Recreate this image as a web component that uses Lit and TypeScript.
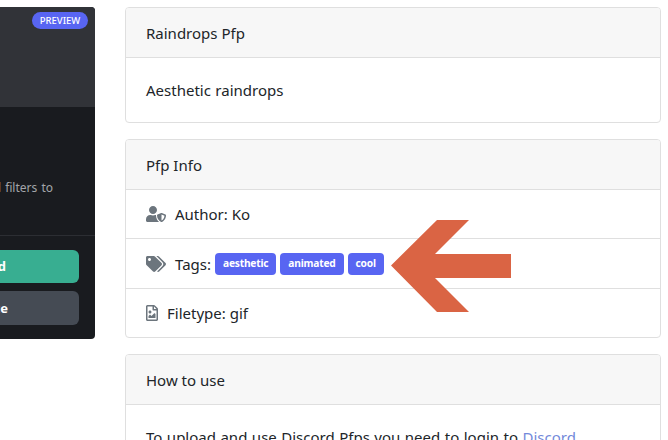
import { LitElement, html, css } from "lit";
import { customElement } from "lit/decorators.js";

@customElement("app-root")
export class AppRoot extends LitElement {
  static styles = css`
    :host {
      display: block;
      width: 668px;
      height: 440px;
      overflow: hidden;
      position: relative;
      background: #fff;
      font-family: "Noto Sans", "Open Sans", sans-serif;
      font-size: 15px;
      line-height: 24px;
      color: #212529;
    }
    .page {
      display: flex;
      align-items: flex-start;
      gap: 30px;
      width: 804px;
      margin-left: -143px;
      padding: 7px 0 0;
    }
    .side {
      flex: 0 0 238px;
      height: 332px;
      box-sizing: border-box;
      display: flex;
      flex-direction: column;
      background: #191b1f;
      border-radius: 4px;
      overflow: hidden;
      position: relative;
    }
    .banner {
      height: 100px;
      background: #313338;
    }
    .badge {
      position: absolute;
      top: 5px;
      right: 7px;
      height: 17px;
      width: 56px;
      border-radius: 9px;
      background: #5865f2;
      color: #fff;
      font-size: 9.5px;
      font-weight: 500;
      line-height: 17px;
      text-align: center;
    }
    .desc {
      height: 129px;
      box-sizing: border-box;
      padding-top: 71px;
      text-align: right;
      padding-right: 42px;
      font-size: 12px;
      word-spacing: 1px;
      line-height: 20px;
      color: #a3a6aa;
      border-bottom: 1px solid #2c2e33;
    }
    .actions {
      display: flex;
      flex-direction: column;
      gap: 8px;
      padding: 14px 16px 0;
    }
    .btn {
      height: 33px;
      border-radius: 6px;
      color: #fff;
      font-size: 13px;
      font-weight: 700;
      line-height: 33px;
      text-align: right;
    }
    .teal { background: #38ae91; padding-right: 73px; }
    .grey { background: #454b54; height: 34px; line-height: 34px; padding-right: 71px; }
    .main {
      flex: 0 0 536px;
      display: flex;
      flex-direction: column;
      gap: 16px;
    }
    .card {
      border: 1px solid #dfdfdf;
      border-radius: 4px;
      overflow: hidden;
      background: #fff;
    }
    .head {
      height: 49px;
      box-sizing: border-box;
      padding: 13px 20px 12px;
      background: #f7f7f7;
      border-bottom: 0;
    }
    .body {
      padding: 20px;
      border-top: 1px solid #dfdfdf;
      word-spacing: 0.6px;
    }
    .row {
      display: flex;
      align-items: center;
      padding: 12px 20px;
      height: 24px;
      border-top: 1px solid #dfdfdf;
    }
    .row.wide {
      height: 25px;
    }
    .ic {
      height: 16px;
      fill: #6c757d;
      flex: none;
      margin-right: 9px;
    }
    .tags {
      display: flex;
      gap: 4px;
      margin-left: 4px;
      margin-top: 1px;
    }
    .tag {
      height: 22px;
      border-radius: 4px;
      background: #5865f2;
      color: #fff;
      font-size: 10.2px;
      letter-spacing: -0.2px;
      font-weight: 700;
      line-height: 21px;
      padding: 0 8px;
    }
    a {
      color: #7289da;
      text-decoration: none;
    }
    .arrow {
      position: absolute;
      left: 391px;
      top: 220px;
      width: 120px;
      height: 92px;
      fill: #da6444;
    }
  `;

  render() {
    return html`
      <div class="page">
        <aside class="side">
          <div class="banner"></div>
          <span class="badge">PREVIEW</span>
          <div class="desc">and filters to</div>
          <div class="actions">
            <div class="btn teal">Download</div>
            <div class="btn grey">Favorite</div>
          </div>
        </aside>
        <main class="main">
          <section class="card">
            <div class="head">Raindrops Pfp</div>
            <div class="body">Aesthetic raindrops</div>
          </section>
          <section class="card">
            <div class="head">Pfp Info</div>
            <div class="row">
              <svg class="ic" viewBox="0 0 640 512"><path d="M622.3 271.1l-115.2-45c-4.1-1.6-12.6-3.7-22.2 0l-115.2 45c-10.7 4.2-17.7 14-17.7 24.9 0 111.6 68.7 188.8 132.9 213.9 9.6 3.7 18 1.6 22.2 0C558.4 489.9 640 420.5 640 296c0-10.9-7-20.7-17.7-24.9zM496 462.4V273.3l95.5 37.3c-5.6 87.1-60.9 135.4-95.5 151.8zM224 256c70.7 0 128-57.3 128-128S294.7 0 224 0 96 57.3 96 128s57.3 128 128 128zm96 40c0-2.5.8-4.8 1.1-7.2-2.5-.1-4.9-.8-7.5-.8h-16.7c-22.2 10.2-46.9 16-72.9 16s-50.6-5.8-72.9-16h-16.7C60.2 288 0 348.2 0 422.4V464c0 26.5 21.5 48 48 48h352c6.8 0 13.3-1.5 19.2-4-54-42.9-99.2-116.7-99.2-212z"/></svg>
              Author: Ko
            </div>
            <div class="row wide">
              <svg class="ic" viewBox="0 0 640 512"><path d="M497.941 225.941L286.059 14.059A48 48 0 0 0 252.118 0H48C21.49 0 0 21.49 0 48v204.118a48 48 0 0 0 14.059 33.941l211.882 211.882c18.744 18.745 49.136 18.746 67.882 0l204.118-204.118c18.745-18.745 18.745-49.137 0-67.882zM112 160c-26.51 0-48-21.49-48-48s21.49-48 48-48 48 21.49 48 48-21.49 48-48 48zm513.941 133.823L421.823 497.941c-18.745 18.745-49.137 18.745-67.882 0l-.36-.36L527.64 323.522c16.999-16.999 26.36-39.6 26.36-63.64s-9.362-46.641-26.36-63.64L331.397 0h48.721a48 48 0 0 1 33.941 14.059l211.882 211.882c18.745 18.745 18.745 49.137 0 67.882z"/></svg>
              Tags:
              <span class="tags">
                <span class="tag">aesthetic</span>
                <span class="tag">animated</span>
                <span class="tag">cool</span>
              </span>
            </div>
            <div class="row">
              <svg class="ic" viewBox="0 0 384 512"><path d="M369.9 97.9L286 14C277 5 264.8-.1 252.1-.1H48C21.5 0 0 21.5 0 48v416c0 26.5 21.5 48 48 48h288c26.5 0 48-21.5 48-48V131.9c0-12.7-5.1-25-14.1-34zM332.1 128H256V51.9l76.1 76.1zM48 464V48h160v104c0 13.3 10.7 24 24 24h104v288H48zm32-48h224V288l-23.5-23.5c-4.7-4.7-12.3-4.7-17 0L176 352l-39.5-39.5c-4.7-4.7-12.3-4.7-17 0L80 352v64zm48-240c-26.5 0-48 21.5-48 48s21.5 48 48 48 48-21.5 48-48-21.5-48-48-48z"/></svg>
              Filetype: gif
            </div>
          </section>
          <section class="card">
            <div class="head">How to use</div>
            <div class="body">To upload and use Discord Pfps you need to login to <a>Discord</a></div>
          </section>
        </main>
      </div>
      <svg class="arrow" viewBox="0 0 120 92"><polygon points="0,45.5 46,0 78,0 44,34 120,34 120,58 44,58 78,92 46,92"/></svg>
    `;
  }
}
